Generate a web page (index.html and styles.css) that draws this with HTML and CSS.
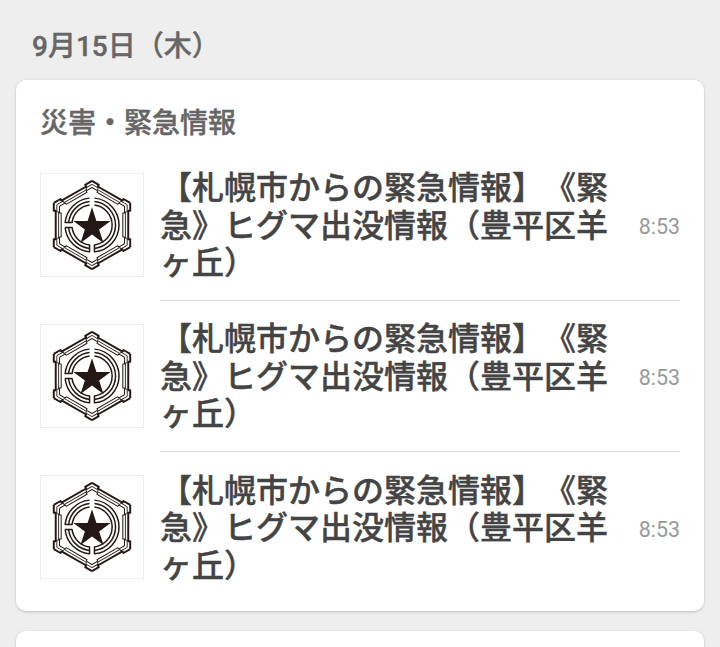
FILE: index.html
```html
<!DOCTYPE html>
<html lang="ja">
<head>
    <meta charset="UTF-8">
    <meta name="viewport" content="width=device-width, initial-scale=1.0">
    <title>災害・緊急情報</title>
    <link rel="stylesheet" href="styles.css">
</head>
<body>
    <svg class="defs" width="0" height="0">
        <defs>
            <path id="hex-edge" d="M52 7L58.930 11 57.930 12.730 83.040 27.230 84.040 25.500 90.970 29.500"/>
            <g id="hex-frame">
                <use href="#hex-edge"/>
                <use href="#hex-edge" transform="rotate(60 52 52)"/>
                <use href="#hex-edge" transform="rotate(120 52 52)"/>
                <use href="#hex-edge" transform="rotate(180 52 52)"/>
                <use href="#hex-edge" transform="rotate(240 52 52)"/>
                <use href="#hex-edge" transform="rotate(300 52 52)"/>
            </g>
        </defs>
        <symbol id="emblem" viewBox="0 0 104 104">
            <g fill="none" stroke="#231815" stroke-linejoin="round">
                <!-- hexagon frame -->
                <use href="#hex-frame" stroke-width="2"/>
                <use href="#hex-frame" stroke-width="1" transform="translate(52 52) scale(.92) translate(-52 -52)"/>
                <use href="#hex-frame" stroke-width="1.200" transform="translate(52 52) scale(.85) translate(-52 -52)"/>
                <!-- rings -->
                <g stroke-width="1.500">
                    <path d="M54.500 24.610A27.500 27.500 0 0 1 54.500 79.390V72.350A20.500 20.500 0 0 0 54.500 31.650"/>
                    <path d="M54.500 28.130A24 24 0 0 1 54.500 75.870"/>
                    <path d="M49.500 24.610A27.500 27.500 0 0 0 24.610 49.500H31.650A20.500 20.500 0 0 1 49.500 31.650"/>
                    <path d="M49.500 28.130A24 24 0 0 0 28.130 49.500"/>
                    <path d="M24.610 54.500A27.500 27.500 0 0 0 49.500 79.390V72.350A20.500 20.500 0 0 1 31.650 54.500H24.610"/>
                    <path d="M28.130 54.500A24 24 0 0 0 49.500 75.870"/>
                </g>
            </g>
            <path fill="#231815" d="M52 34l4.500 14 14.500-.1-11.700 8.600 4.400 13.900L52 61.800l-11.700 8.600 4.400-13.900L33 47.900l14.500.1z"/>
        </symbol>
    </svg>

    <h2 class="date">9月15日（木）</h2>

    <section class="card">
        <h3 class="card-title">災害・緊急情報</h3>
        <ul class="news-list">
            <li class="news-item">
                <div class="thumb"><svg class="emblem"><use href="#emblem"/></svg></div>
                <div class="news-body">
                    <p class="news-text">【札幌市からの緊急情報】《緊急》ヒグマ出没情報（豊平区羊ヶ丘）</p>
                    <span class="news-time">8:53</span>
                </div>
            </li>
            <li class="news-item">
                <div class="thumb"><svg class="emblem"><use href="#emblem"/></svg></div>
                <div class="news-body">
                    <p class="news-text">【札幌市からの緊急情報】《緊急》ヒグマ出没情報（豊平区羊ヶ丘）</p>
                    <span class="news-time">8:53</span>
                </div>
            </li>
            <li class="news-item">
                <div class="thumb"><svg class="emblem"><use href="#emblem"/></svg></div>
                <div class="news-body">
                    <p class="news-text">【札幌市からの緊急情報】《緊急》ヒグマ出没情報（豊平区羊ヶ丘）</p>
                    <span class="news-time">8:53</span>
                </div>
            </li>
        </ul>
    </section>

    <section class="card card-next"></section>
</body>
</html>
```

FILE: styles.css
```css
* {
    box-sizing: border-box;
}
html, body {
    height: 647px;
    overflow: hidden;
}
body {
    margin: 0;
    padding: 0 16px;
    background-color: #eeeeee;
    font-family: Roboto, "Noto Sans CJK JP", sans-serif;
    text-spacing-trim: space-all;
}
.defs {
    position: absolute;
}
.date {
    margin: 0;
    height: 80px;
    padding: 27px 0 0 16px;
    font-size: 28px;
    line-height: 40px;
    font-weight: 500;
    -webkit-text-stroke: 0.4px #666666;
    color: #666666;
}
.card {
    background-color: #ffffff;
    border-radius: 10px;
    box-shadow: 0 1px 3px rgba(0, 0, 0, 0.22);
    padding: 24px 24px 7px;
}
.card-title {
    margin: 0 0 7px;
    font-size: 28px;
    line-height: 40px;
    font-weight: 500;
    -webkit-text-stroke: 0.4px #666666;
    color: #666666;
}
.news-list {
    list-style: none;
    margin: 0;
    padding: 0;
}
.news-item {
    display: flex;
    gap: 16px;
    height: 151px;
}
.thumb {
    flex: none;
    width: 104px;
    height: 104px;
    margin-top: 22px;
    border: 1px solid #eeeeee;
}
.emblem {
    display: block;
    width: 102px;
    height: 102px;
}
.news-body {
    flex: 1;
    display: flex;
    align-items: center;
    justify-content: space-between;
    margin-bottom: 1px;
    padding-top: 2px;
    border-bottom: 1px solid #dddddd;
}
.news-item:last-child .news-body {
    border-bottom: none;
}
.news-text {
    margin: 0;
    width: 450px;
    font-size: 32px;
    line-height: 37.5px;
    font-weight: 500;
    -webkit-text-stroke: 0.4px #444444;
    color: #444444;
}
.news-time {
    font-size: 21.4px;
    color: #999999;
}
.card-next {
    height: 16px;
    padding: 0;
    margin-top: 20px;
    border-radius: 10px 10px 0 0;
}
```
